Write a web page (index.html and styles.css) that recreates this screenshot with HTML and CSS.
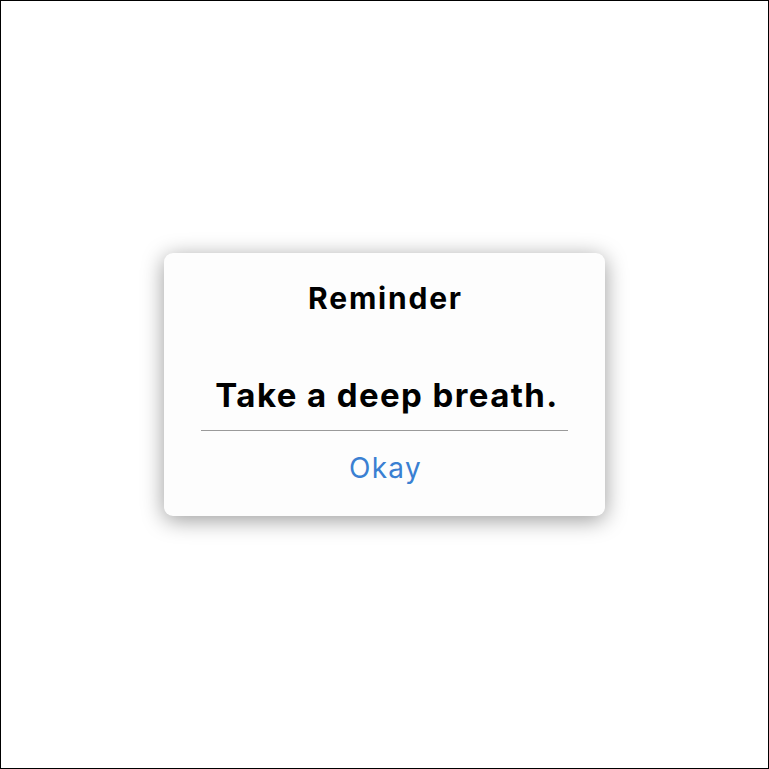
FILE: index.html
```html
<!DOCTYPE html>
<html>
<head>
<meta charset="utf-8">
<link rel="stylesheet" href="styles.css">
</head>
<body>
<div class="frame">
  <div class="dialog">
    <div class="title">Reminder</div>
    <div class="message">Take a deep breath.</div>
    <div class="divider"></div>
    <div class="action">Okay</div>
  </div>
</div>
</body>
</html>
```
FILE: styles.css
```css
html, body {
  margin: 0;
  padding: 0;
  background: #ffffff;
}
.frame {
  box-sizing: border-box;
  width: 769px;
  height: 769px;
  border: 1px solid #000000;
  display: flex;
  align-items: center;
  justify-content: center;
  font-family: Inter, "Liberation Sans", sans-serif;
}
.dialog {
  box-sizing: border-box;
  width: 441px;
  height: 263px;
  background: #fdfdfd;
  border-radius: 9px;
  box-shadow: 0 4px 22px rgba(0, 0, 0, 0.4);
  display: flex;
  flex-direction: column;
  align-items: center;
  padding-top: 30px;
}
.title {
  font-size: 30px;
  font-weight: 700;
  color: #000;
  line-height: 30px;
  letter-spacing: 1.8px;
  padding-left: 2px;
}
.message {
  margin-top: 66px;
  font-size: 33px;
  font-weight: 700;
  color: #000;
  line-height: 33px;
  letter-spacing: 1.4px;
  padding-left: 5px;
}
.divider {
  margin-top: 18px;
  width: 367px;
  height: 1px;
  background: #9a9a9a;
}
.action {
  margin-top: 23px;
  font-size: 28px;
  font-weight: 400;
  color: #3a80d2;
  line-height: 28px;
  letter-spacing: 1.3px;
  padding-left: 2px;
}
```
